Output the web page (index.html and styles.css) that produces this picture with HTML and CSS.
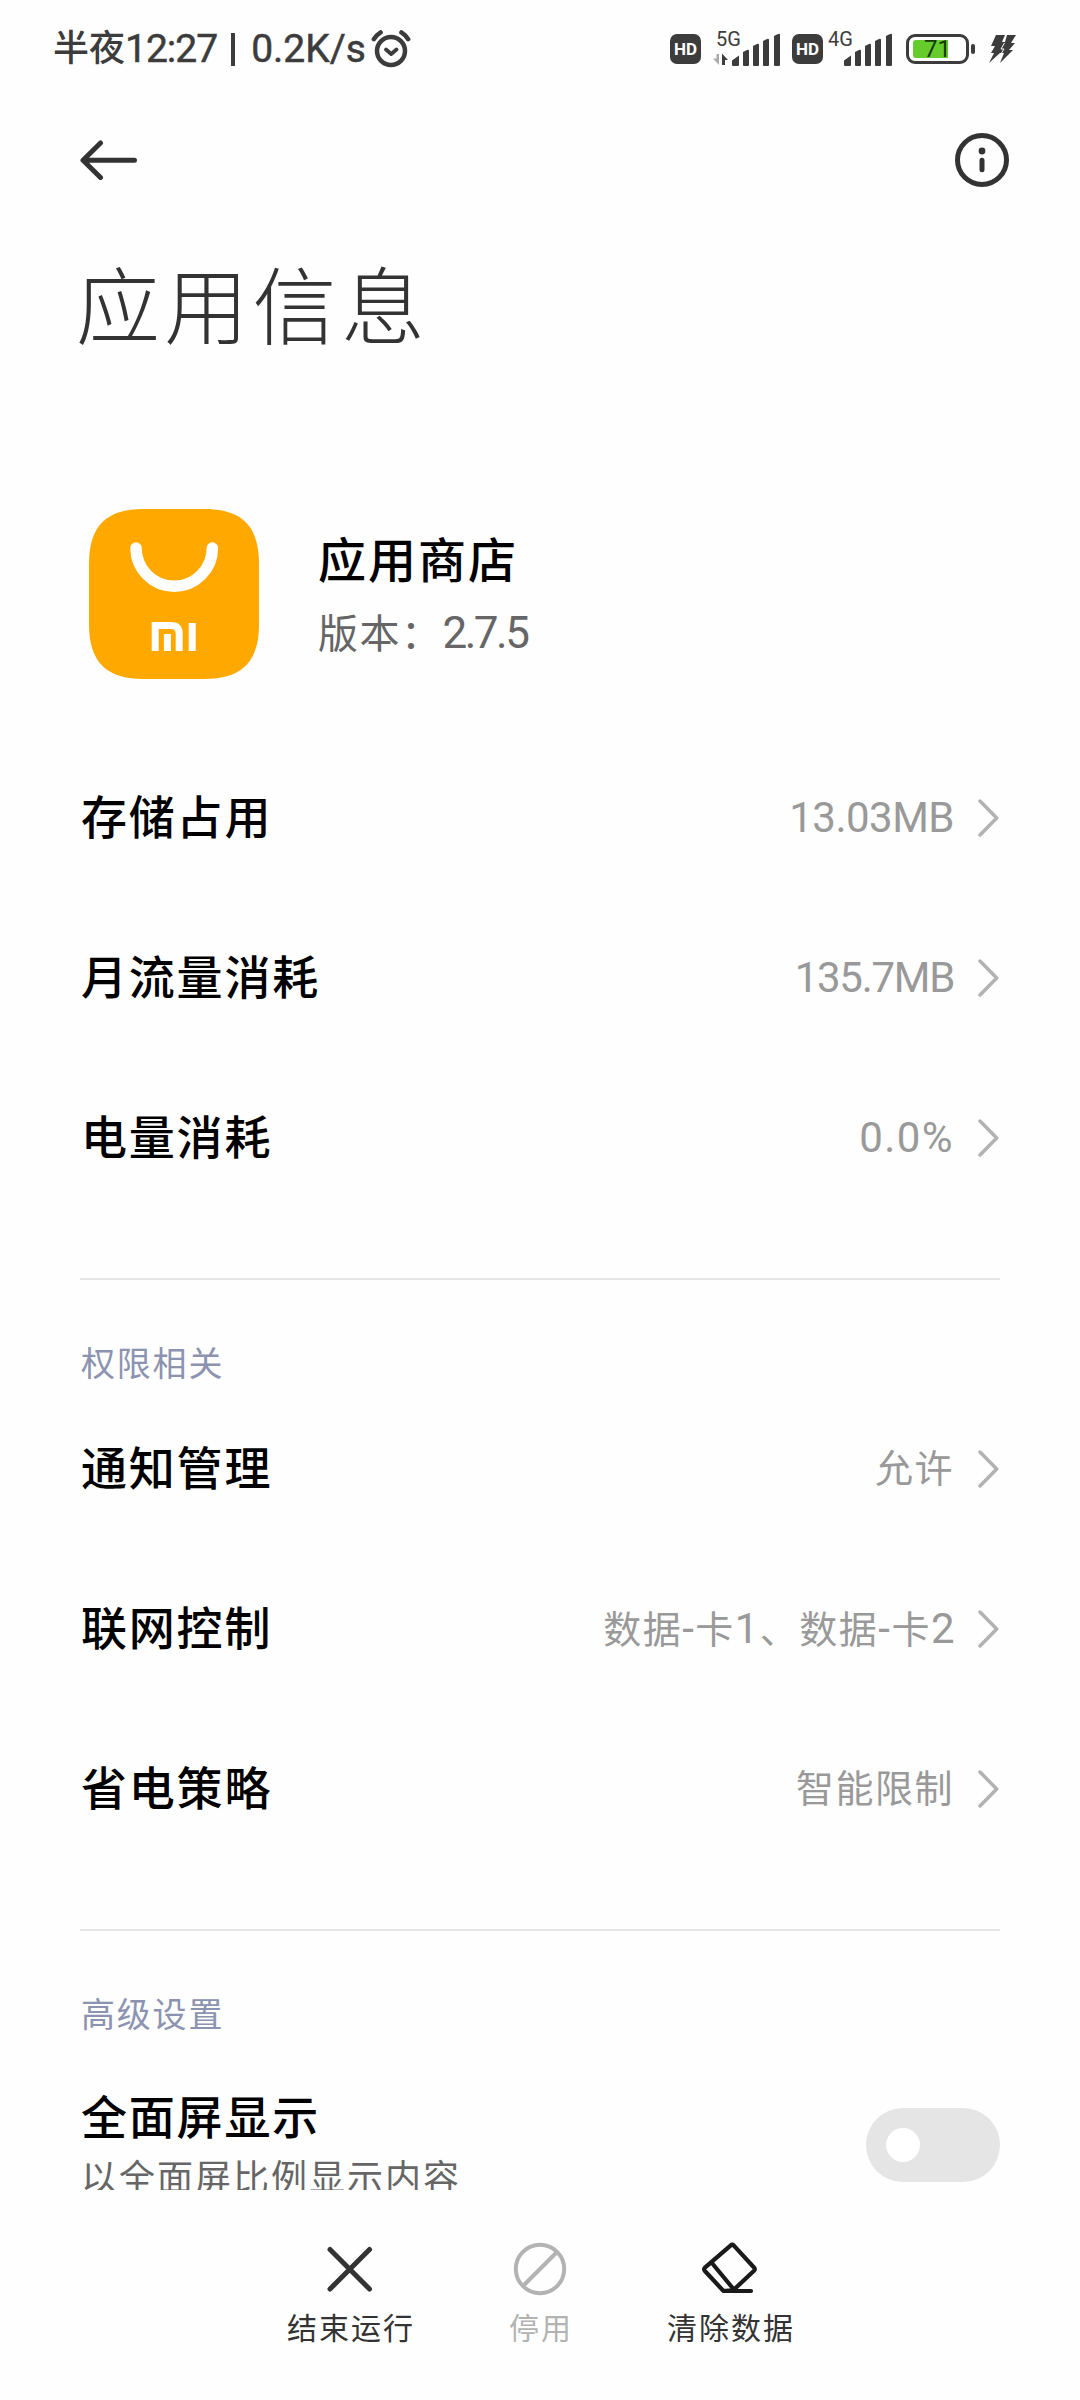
FILE: index.html
```html
<!DOCTYPE html>
<html lang="zh-CN">
<head>
<meta charset="UTF-8">
<meta name="viewport" content="width=device-width, initial-scale=1.0">
<title>应用信息</title>
<link rel="stylesheet" href="styles.css">
</head>
<body>
<div class="screen">
    <div class="status-bar">
        <div class="status-time">
            <span>半夜</span><span class="status-num">12:27</span><span class="status-sep"></span><span class="status-num speed">0.2K/s</span>
            <svg class="alarm" width="40" height="40" viewBox="0 0 40 40" fill="none" stroke="#3c3c3c" stroke-width="4.500" stroke-linecap="round" stroke-linejoin="round">
                <circle cx="20" cy="22" r="14"/>
                <path d="M2.800 10.200Q5.500 6 9.600 3.400M37.200 10.200Q34.500 6 30.400 3.400"/>
                <path d="M15 20.500l5.200 4.500 5.300-4.500" stroke-width="3.800"/>
            </svg>
        </div>
        <div class="status-icons">
            <span class="hd">HD</span>
            <div class="signal signal-5g">
                <span class="net">5G</span>
                <svg width="68" height="40" viewBox="0 0 68 40" fill="#3c3c3c">
                    <path d="M6 28v11L0 32.500h3.500V28z" fill="#aaa"/>
                    <path d="M9 39V27.500l6 6.500h-3v5z"/>
                    <path d="M19 39v-4.500l7-5V39q0 1-1 1h-5q-1 0-1-1zM30 26l4-2q2-1 2 1v14q0 1-1 1h-4q-1 0-1-1zM40 20l4-2q2-1 2 1v20q0 1-1 1h-4q-1 0-1-1zM50 15l4-2q2-1 2 1v25q0 1-1 1h-4q-1 0-1-1zM61 10l4-2q2-1 2 1v30q0 1-1 1h-4q-1 0-1-1z"/>
                </svg>
            </div>
            <span class="hd">HD</span>
            <div class="signal signal-4g">
                <span class="net">4G</span>
                <svg width="68" height="40" viewBox="0 0 68 40" fill="#3c3c3c">
                    <path d="M19 39v-4.500l7-5V39q0 1-1 1h-5q-1 0-1-1zM30 26l4-2q2-1 2 1v14q0 1-1 1h-4q-1 0-1-1zM40 20l4-2q2-1 2 1v20q0 1-1 1h-4q-1 0-1-1zM50 15l4-2q2-1 2 1v25q0 1-1 1h-4q-1 0-1-1zM61 10l4-2q2-1 2 1v30q0 1-1 1h-4q-1 0-1-1z"/>
                </svg>
            </div>
            <div class="battery">
                <div class="battery-body"><span class="battery-fill"></span><span class="battery-text">71</span></div>
                <div class="battery-tip"></div>
            </div>
            <svg class="bolt" width="28" height="28" viewBox="0 0 28 28" fill="#3c3c3c">
                <path d="M7 0h9l-3 7h3l2-7h9l-5 8h4l-6 7h4L11 28l4-10h-4L0 28l5-10H2l4-7H2z"/>
                <path d="M15.500 8l-3.500 6h3l-2.500 4" fill="none" stroke="#fff" stroke-width="1"/>
            </svg>
        </div>
    </div>

    <header class="header">
        <svg width="58" height="40" viewBox="0 0 58 40" fill="none" stroke="#333" stroke-width="5" stroke-linecap="round" stroke-linejoin="round">
            <path d="M20.500 3L3 20.300 20.500 37.500M4 20.300h50.500"/>
        </svg>
        <svg width="54" height="54" viewBox="0 0 54 54" fill="none" stroke="#333" stroke-width="5" stroke-linecap="round">
            <circle cx="27" cy="27" r="24.500"/>
            <circle cx="27" cy="18" r="3.400" fill="#333" stroke="none"/>
            <path d="M27 27.300v9.400"/>
        </svg>
    </header>

    <h1 class="page-title">应用信息</h1>

    <main class="content">
        <section class="app-card">
            <svg class="app-icon" width="170" height="170" viewBox="0 0 170 170" fill="none">
                <path d="M0 55C0 17 17 0 55 0h60c38 0 55 17 55 55v60c0 38-17 55-55 55H55c-38 0-55-17-55-55z" fill="#ffa800"/>
                <path d="M47 39a38.200 38.200 0 0 0 76.400 0" stroke="#fff" stroke-width="11.500" stroke-linecap="round"/>
                <path d="M66.200 142v-25.600H82q8.200 0 8.200 8V142M78.400 125v17M103.200 114v28" stroke="#fff" stroke-width="7"/>
            </svg>
            <div class="app-text">
                <div class="app-name">应用商店</div>
                <div class="app-version">版本：<span class="version-num">2.7.5</span></div>
            </div>
        </section>

        <section class="group">
            <div class="row">
                <span class="label">存储占用</span>
                <span class="value num">13.03MB</span>
                <svg class="chevron" viewBox="0 0 22 40"><path d="M2 3l16.700 17L2 37"/></svg>
            </div>
            <div class="row">
                <span class="label">月流量消耗</span>
                <span class="value num tight">135.7MB</span>
                <svg class="chevron" viewBox="0 0 22 40"><path d="M2 3l16.700 17L2 37"/></svg>
            </div>
            <div class="row">
                <span class="label">电量消耗</span>
                <span class="value num wide">0.0%</span>
                <svg class="chevron" viewBox="0 0 22 40"><path d="M2 3l16.700 17L2 37"/></svg>
            </div>
        </section>

        <section class="group divided">
            <h2 class="group-title">权限相关</h2>
            <div class="row">
                <span class="label">通知管理</span>
                <span class="value">允许</span>
                <svg class="chevron" viewBox="0 0 22 40"><path d="M2 3l16.700 17L2 37"/></svg>
            </div>
            <div class="row">
                <span class="label">联网控制</span>
                <span class="value">数据<span class="num wide">-</span>卡<span class="num wide">1</span>、数据<span class="num wide">-</span>卡<span class="num">2</span></span>
                <svg class="chevron" viewBox="0 0 22 40"><path d="M2 3l16.700 17L2 37"/></svg>
            </div>
            <div class="row">
                <span class="label">省电策略</span>
                <span class="value">智能限制</span>
                <svg class="chevron" viewBox="0 0 22 40"><path d="M2 3l16.700 17L2 37"/></svg>
            </div>
        </section>

        <section class="group divided">
            <h2 class="group-title">高级设置</h2>
            <div class="row switch-row">
                <div class="label">
                    <div>全面屏显示</div>
                    <div class="summary">以全面屏比例显示内容</div>
                </div>
                <div class="switch"><span class="knob"></span></div>
            </div>
        </section>
    </main>

    <footer class="actions">
        <div class="action">
            <svg width="56" height="56" viewBox="0 0 56 56" fill="none" stroke="#333" stroke-width="5" stroke-linecap="round">
                <path d="M8 8.500l39.500 39.500M47.500 8.500L8 48"/>
            </svg>
            <span>结束运行</span>
        </div>
        <div class="action disabled">
            <svg width="56" height="56" viewBox="0 0 56 56" fill="none" stroke="#b3b3b3" stroke-width="4">
                <circle cx="28" cy="28" r="24.200"/>
                <path d="M45 11L11 45"/>
            </svg>
            <span>停用</span>
        </div>
        <div class="action">
            <svg width="56" height="56" viewBox="0 0 56 56" fill="none" stroke="#1a1a1a" stroke-width="4.200" stroke-linecap="round" stroke-linejoin="round">
                <path d="M28.500 4.600q1.700-1.600 3.400 0L52 26.500q1.500 1.700 0 3.200L31.500 49 21.500 50 2.900 30q-1.500-1.700 0-3.300zM9.500 21.500L31.500 48M21.500 50H49"/>
            </svg>
            <span>清除数据</span>
        </div>
    </footer>
</div>
</body>
</html>
```
FILE: styles.css
```css
:root {
    --text-color: #333;
    --value-color: #999;
    --heading-color: #8c93b0;
    --line-color: #e5e5e5;
    --status-color: #3c3c3c;
}
* {
    box-sizing: border-box;
}
body {
    margin: 0;
    background-color: #fff;
    color: var(--text-color);
    font-family: Roboto, "Noto Sans CJK SC", sans-serif;
}
.screen {
    display: flex;
    flex-direction: column;
    width: 1080px;
    height: 2400px;
    overflow: hidden;
    background-color: #fefefe;
}
.screen svg {
    display: block;
    flex: none;
}

/* status bar */
.status-bar {
    display: flex;
    justify-content: space-between;
    height: 98px;
    padding: 0 63px 0 53px;
    color: var(--status-color);
}
.status-time {
    display: flex;
    align-items: center;
    height: 98px;
    font-size: 36px;
    font-weight: 500;
    line-height: 50px;
    white-space: nowrap;
}
.status-num {
    font-size: 39px;
    font-weight: 400;
    letter-spacing: -1px;
    -webkit-text-stroke: 0.5px var(--status-color);
}
.speed {
    letter-spacing: 0;
}
.status-sep {
    width: 4px;
    height: 33px;
    margin: 0 16px 0 14px;
    background-color: var(--status-color);
}
.alarm {
    margin-left: 5px;
}
.status-icons {
    display: flex;
    align-items: center;
    height: 98px;
}
.hd {
    width: 31px;
    height: 30px;
    border-radius: 7px;
    background-color: var(--status-color);
    color: #fff;
    font-size: 17px;
    font-weight: 700;
    line-height: 30px;
    text-align: center;
}
.signal {
    display: flex;
    position: relative;
    height: 40px;
}
.signal-5g {
    width: 68px;
    margin: 0 11px 6px 12px;
}
.signal-4g {
    width: 68px;
    margin: 0 13px 6px 2px;
}
.net {
    position: absolute;
    top: 3px;
    left: 3px;
    font-size: 20px;
    line-height: 20px;
}
.battery {
    display: flex;
    align-items: center;
    gap: 2px;
}
.battery-body {
    position: relative;
    width: 63px;
    height: 30px;
    border: 3px solid var(--status-color);
    border-radius: 9px;
}
.battery-fill {
    display: block;
    width: 35px;
    height: 18px;
    margin: 3px 0 0 4px;
    border-radius: 3px 0 0 3px;
    background-color: #66cc2e;
}
.battery-text {
    position: absolute;
    inset: 0;
    color: #173a08;
    font-size: 24px;
    line-height: 25px;
    text-align: center;
}
.battery-tip {
    width: 4px;
    height: 10px;
    border-radius: 2px;
    background-color: var(--status-color);
}
.bolt {
    margin-left: 14px;
}

/* header */
.header {
    display: flex;
    align-items: center;
    justify-content: space-between;
    height: 124px;
    padding: 0 71px 0 80px;
}
.page-title {
    height: 287px;
    margin: 0;
    padding: 38px 0 0 76px;
    font-size: 84px;
    font-weight: 300;
    line-height: 100px;
    letter-spacing: 4.3px;
}

/* content */
.content {
    height: 1681px;
    overflow: hidden;
}
.app-card {
    display: flex;
    height: 229px;
    padding-left: 89px;
}
.app-text {
    padding: 21px 0 0 59px;
}
.app-name {
    color: #000;
    font-size: 48px;
    font-weight: 500;
    line-height: 64px;
    letter-spacing: 2px;
}
.app-version {
    margin-top: 9px;
    color: #666;
    font-size: 40px;
    line-height: 60px;
    letter-spacing: 1.5px;
}
.version-num {
    font-size: 44px;
    letter-spacing: -2.5px;
}
.group {
    margin: 0 80px;
}
.group:nth-of-type(2) {
    height: 540px;
}
.divided {
    height: 651px;
    border-top: 2px solid var(--line-color);
}
.group-title {
    margin: 0;
    padding: 60px 0 0 1px;
    color: var(--heading-color);
    font-size: 34px;
    font-weight: 400;
    line-height: 49px;
    letter-spacing: 1.8px;
}
.row {
    display: flex;
    align-items: center;
    height: 160px;
}
.label {
    flex: 1;
    padding-left: 1px;
    color: #000;
    font-size: 46px;
    font-weight: 500;
    line-height: 56px;
    letter-spacing: 1.8px;
}
.value {
    margin-right: 24px;
    color: var(--value-color);
    font-size: 38px;
    line-height: 56px;
    letter-spacing: 1.5px;
}
.num {
    font-size: 42px;
    letter-spacing: -0.5px;
}
.tight {
    letter-spacing: -1.3px;
}
.wide {
    letter-spacing: 1.4px;
}
.chevron {
    width: 22px;
    height: 40px;
    fill: none;
    stroke: #b2b2b2;
    stroke-width: 3.5;
    stroke-linecap: round;
    stroke-linejoin: round;
}
.switch-row {
    height: 210px;
}
.switch-row .label {
    padding-top: 12px;
}
.summary {
    color: #666;
    font-size: 36px;
    font-weight: 400;
    line-height: 66px;
    letter-spacing: 2px;
}
.switch {
    display: flex;
    align-items: center;
    width: 134px;
    height: 74px;
    padding-left: 20px;
    border-radius: 37px;
    background-color: #e5e5e5;
}
.knob {
    width: 34px;
    height: 34px;
    border-radius: 50%;
    background-color: #fff;
}

/* bottom actions */
.actions {
    display: flex;
    justify-content: center;
    flex: 1;
    padding-top: 51px;
}
.action {
    display: flex;
    flex-direction: column;
    align-items: center;
    width: 190px;
    font-size: 30px;
    line-height: 40px;
    letter-spacing: 2px;
}
.action span {
    margin-top: 12px;
    padding-left: 2px;
}
.disabled {
    color: #b3b3b3;
}
```
